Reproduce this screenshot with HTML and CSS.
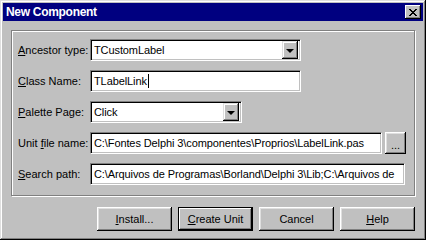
FILE: index.html
```html
<!DOCTYPE html>
<html lang="en">
<head>
    <meta charset="UTF-8">
    <title>New Component</title>
    <link rel="stylesheet" href="styles.css">
</head>
<body>
    <div class="window">
        <div class="titlebar">
            <span class="title">New Component</span>
            <button class="close" type="button">
                <svg width="8" height="7" viewBox="0 0 8 7">
                    <path d="M0 0h2v1h1v1h2v-1h1v-1h2v1h-1v1h-1v1h-1v1h1v1h1v1h1v1h-2v-1h-1v-1h-2v1h-1v1h-2v-1h1v-1h1v-1h1v-1h-1v-1h-1v-1h-1z" fill="#000"/>
                </svg>
            </button>
        </div>
        <div class="content">
            <div class="group">
                <div class="row">
                    <label class="label"><u>A</u>ncestor type:</label>
                    <div class="field combo wide">
                        <span class="value">TCustomLabel</span>
                        <span class="drop"><i class="arrow"></i></span>
                    </div>
                </div>
                <div class="row">
                    <label class="label"><u>C</u>lass Name:</label>
                    <div class="field wide">
                        <span class="value">TLabelLink<span class="caret"></span></span>
                    </div>
                </div>
                <div class="row">
                    <label class="label"><u>P</u>alette Page:</label>
                    <div class="field combo short">
                        <span class="value">Click</span>
                        <span class="drop"><i class="arrow"></i></span>
                    </div>
                </div>
                <div class="row">
                    <label class="label">Unit <u>f</u>ile name:</label>
                    <div class="field unit">
                        <span class="value">C:\Fontes Delphi 3\componentes\Proprios\LabelLink.pas</span>
                    </div>
                    <button class="btn browse" type="button">...</button>
                </div>
                <div class="row">
                    <label class="label"><u>S</u>earch path:</label>
                    <div class="field full">
                        <span class="value">C:\Arquivos de Programas\Borland\Delphi 3\Lib;C:\Arquivos de</span>
                    </div>
                </div>
            </div>
            <div class="buttons">
                <button class="btn" type="button"><u>I</u>nstall...</button>
                <button class="btn default" type="button"><u>C</u>reate Unit</button>
                <button class="btn" type="button">Cancel</button>
                <button class="btn" type="button"><u>H</u>elp</button>
            </div>
        </div>
    </div>
</body>
</html>
```

FILE: styles.css
```css
body {
    margin: 0;
    background-color: #c0c0c0;
    font-family: 'Liberation Sans', Arial, sans-serif;
    font-size: 11px;
    color: #000;
}
.window {
    box-sizing: border-box;
    width: 426px;
    height: 240px;
    padding: 3px;
    background-color: #c0c0c0;
    box-shadow: inset -1px -1px #000, inset 1px 1px #dfdfdf, inset -2px -2px #808080, inset 2px 2px #fff;
}
.titlebar {
    height: 18px;
    background-color: #000080;
    display: flex;
    align-items: center;
    justify-content: space-between;
    padding: 0 2px 0 3px;
}
.title {
    color: #fff;
    font-weight: bold;
    font-size: 12px;
    letter-spacing: -0.3px;
}
.close {
    box-sizing: border-box;
    width: 16px;
    height: 14px;
    padding: 0;
    border: none;
    background-color: #c0c0c0;
    display: flex;
    align-items: center;
    justify-content: center;
    box-shadow: inset -1px -1px #000, inset 1px 1px #fff, inset -2px -2px #808080;
}
.content {
    padding: 9px 8px 0 8px;
}
.group {
    box-sizing: border-box;
    height: 166px;
    border: 1px solid #808080;
    box-shadow: inset 1px 1px #fff, 1px 1px #fff;
    padding: 8px 0 0 6px;
    display: flex;
    flex-direction: column;
    gap: 9px;
}
.row {
    display: flex;
    align-items: center;
    height: 22px;
}
.label {
    width: 72px;
}
u {
    text-decoration: underline;
    text-underline-offset: 1px;
}
.field {
    box-sizing: border-box;
    height: 22px;
    background-color: #fff;
    border-top: 1px solid #808080;
    border-left: 1px solid #808080;
    border-right: 1px solid #fff;
    border-bottom: 1px solid #fff;
    box-shadow: inset 1px 1px #000, inset -1px -1px #c0c0c0;
    display: flex;
    align-items: center;
    padding: 0 2px 0 3px;
    white-space: nowrap;
    overflow: hidden;
    letter-spacing: -0.1px;
}
.value {
    flex: 1;
    display: flex;
    align-items: center;
}
.caret {
    display: inline-block;
    width: 1px;
    height: 14px;
    margin-left: 1px;
    background-color: #000;
}
.wide {
    width: 211px;
}
.short {
    width: 152px;
}
.unit {
    width: 292px;
}
.full {
    width: 315px;
}
.combo {
    padding-right: 2px;
}
.drop {
    box-sizing: border-box;
    width: 16px;
    height: 18px;
    background-color: #c0c0c0;
    box-shadow: inset -1px -1px #000, inset 1px 1px #dfdfdf, inset -2px -2px #808080, inset 2px 2px #fff;
    display: flex;
    align-items: center;
    justify-content: center;
}
.arrow {
    width: 0;
    height: 0;
    border-left: 4px solid transparent;
    border-right: 4px solid transparent;
    border-top: 4px solid #000;
    margin-top: 1px;
}
.btn {
    box-sizing: border-box;
    padding: 0;
    border: none;
    background-color: #c0c0c0;
    font-family: inherit;
    font-size: 11px;
    color: #000;
    box-shadow: inset -1px -1px #000, inset 1px 1px #fff, inset -2px -2px #808080, inset 2px 2px #dfdfdf;
}
.browse {
    width: 21px;
    height: 22px;
    margin-left: 3px;
    padding-top: 4px;
}
.buttons {
    display: flex;
    gap: 6px;
    padding: 11px 0 0 86px;
}
.buttons .btn {
    width: 75px;
    height: 24px;
}
.btn.default {
    border: 1px solid #000;
    box-shadow: inset -1px -1px #000, inset 1px 1px #fff, inset -2px -2px #808080;
}
```
